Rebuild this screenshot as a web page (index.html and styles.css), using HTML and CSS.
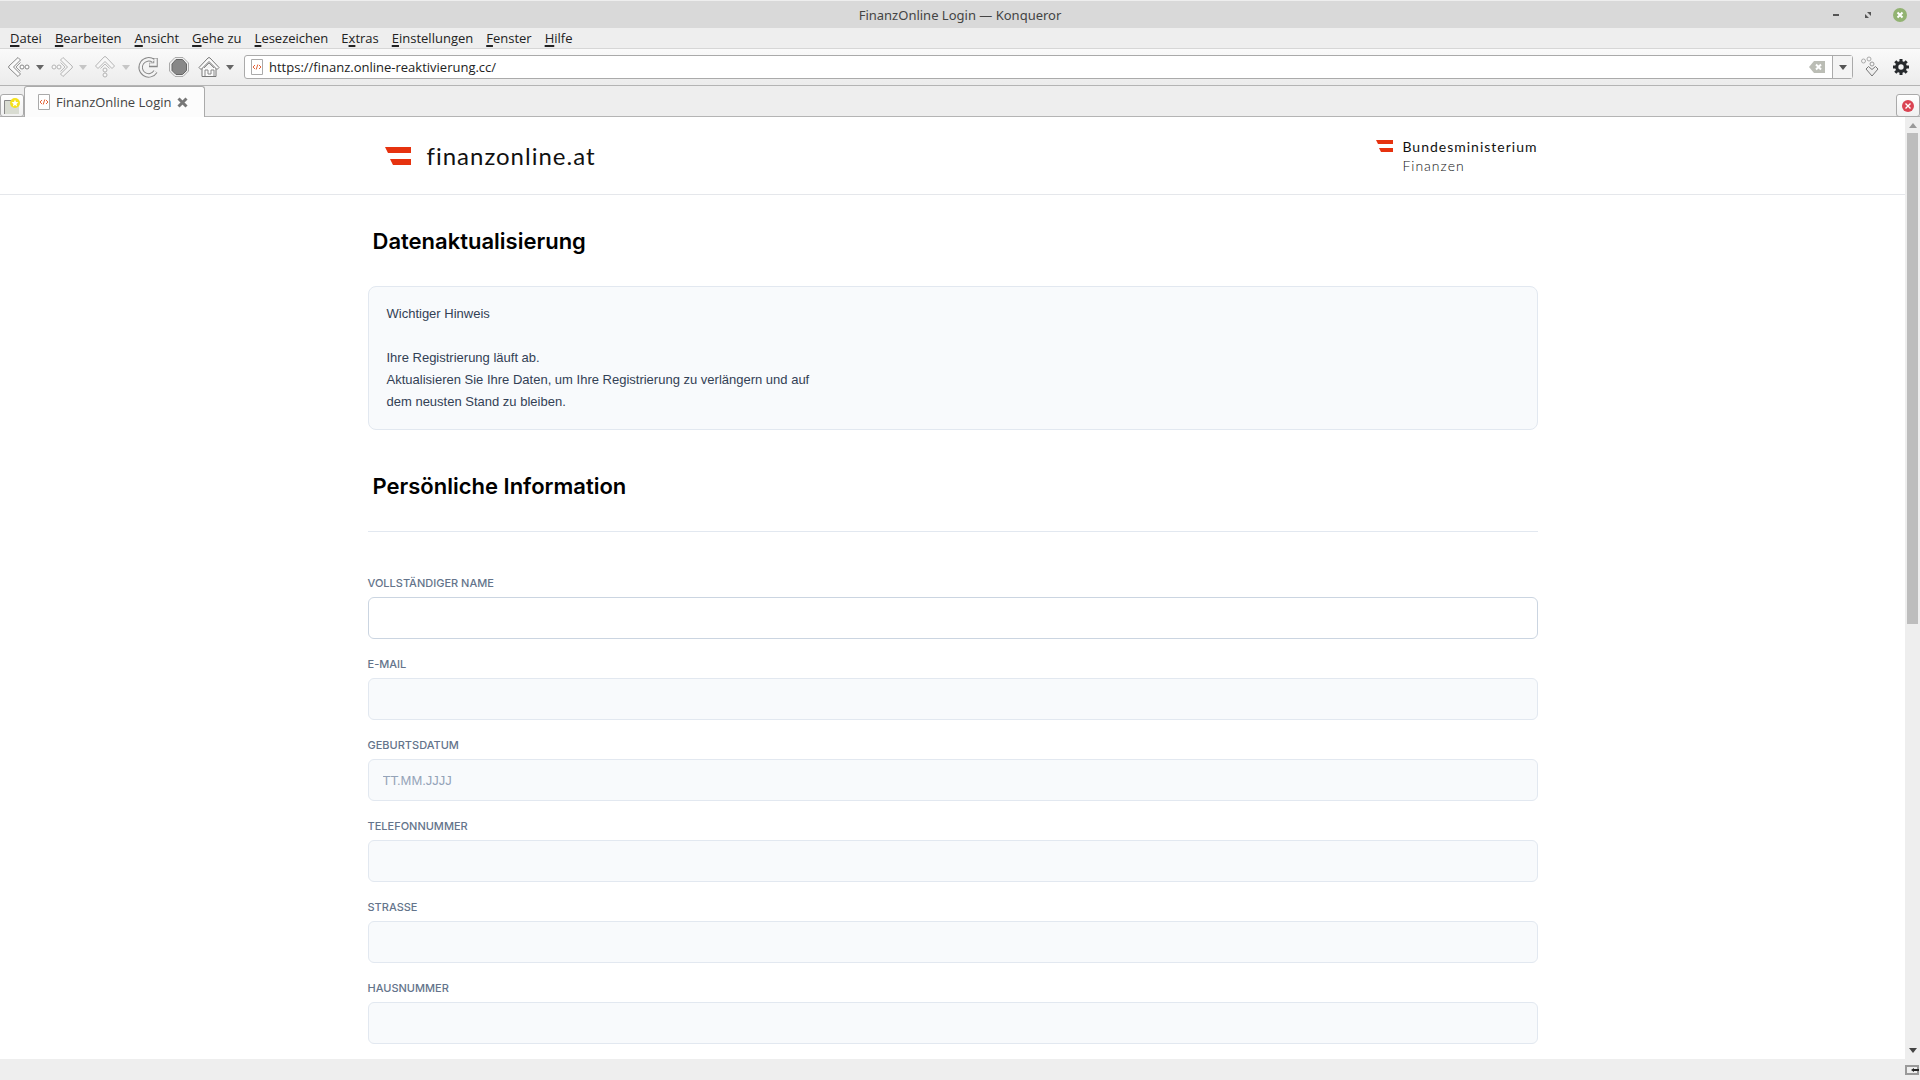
FILE: index.html
```html
<!DOCTYPE html>
<html lang="de">
<head>
    <meta charset="UTF-8">
    <meta name="viewport" content="width=device-width, initial-scale=1.0">
    <title>FinanzOnline Login — Konqueror</title>
    <link rel="stylesheet" href="styles.css">
</head>
<body>
    <!-- Window title -->
    <div class="titlebar">
        <span class="window-title">FinanzOnline Login — Konqueror</span>
        <div class="window-buttons">
            <button type="button" aria-label="Minimieren"><svg viewBox="0 0 14 14"><path d="M4 7h6" stroke="#555" stroke-width="2"/></svg></button>
            <button type="button" aria-label="Maximieren"><svg viewBox="0 0 14 14"><path d="M6 4h4v4zM4 6v4h4z" fill="#555"/></svg></button>
            <button type="button" aria-label="Schließen"><svg viewBox="0 0 14 14"><circle cx="7" cy="7" r="7" fill="#92b372"/><path d="M4.5 4.5l5 5M9.5 4.5l-5 5" stroke="#fff" stroke-width="2"/></svg></button>
        </div>
    </div>

    <nav class="menubar">
        <button type="button"><u>D</u>atei</button>
        <button type="button"><u>B</u>earbeiten</button>
        <button type="button"><u>A</u>nsicht</button>
        <button type="button"><u>G</u>ehe zu</button>
        <button type="button"><u>L</u>esezeichen</button>
        <button type="button">E<u>x</u>tras</button>
        <button type="button"><u>E</u>instellungen</button>
        <button type="button"><u>F</u>enster</button>
        <button type="button"><u>H</u>ilfe</button>
    </nav>

    <div class="toolbar">
        <div class="tool">
            <button type="button" class="tool-icon" aria-label="Zurück"><svg viewBox="0 0 22 22"><path d="M10 1.500l2.500 2.500-7 7 7 7-2.500 2.500L1 12q-1-1 0-2z" fill="#fafafa" stroke="#888"/><path d="M12.500 6.500l-4.500 4.500 4.500 4.500" fill="none" stroke="#999"/><circle cx="14" cy="11" r="2" fill="#fff" stroke="#888"/><circle cx="19" cy="11" r="2" fill="#fff" stroke="#888"/></svg></button>
            <button type="button" class="caret" aria-label="Verlauf zurück"><svg viewBox="0 0 8 5"><path d="M0 0h8L4 5z" fill="#666"/></svg></button>
        </div>
        <div class="tool disabled">
            <button type="button" class="tool-icon" aria-label="Vor"><svg viewBox="0 0 22 22"><path d="M12 1.500L9.500 4l7 7-7 7 2.500 2.500 9-8.500q1-1 0-2z" fill="#fafafa" stroke="#777"/><path d="M9.500 6.500L14 11l-4.500 4.500" fill="none" stroke="#888"/><circle cx="8" cy="11" r="2" fill="#fff" stroke="#777"/><circle cx="3" cy="11" r="2" fill="#fff" stroke="#777"/></svg></button>
            <button type="button" class="caret" aria-label="Verlauf vor"><svg viewBox="0 0 8 5"><path d="M0 0h8L4 5z" fill="#999"/></svg></button>
        </div>
        <div class="tool disabled">
            <button type="button" class="tool-icon" aria-label="Nach oben"><svg viewBox="0 0 22 22"><path d="M1.500 10L10 1q1-1 2 0l8.500 9-2.500 2.500-7-7-7 7z" fill="#fafafa" stroke="#777"/><path d="M6.500 12.500L11 8l4.500 4.500" fill="none" stroke="#888"/><circle cx="11" cy="14" r="2" fill="#fff" stroke="#777"/><circle cx="11" cy="19" r="2" fill="#fff" stroke="#777"/></svg></button>
            <button type="button" class="caret" aria-label="Übergeordnete Ordner"><svg viewBox="0 0 8 5"><path d="M0 0h8L4 5z" fill="#999"/></svg></button>
        </div>
        <button type="button" class="tool-icon" aria-label="Neu laden"><svg viewBox="0 0 22 22"><path d="M17.500 15.500A8 8 0 1 1 15.500 5M17.500 2v7H11" fill="none" stroke="#888" stroke-width="4.500"/><path d="M17.500 15.500A8 8 0 1 1 15.500 5M17.500 2.500v6H11.500" fill="none" stroke="#f4f4f4" stroke-width="2.500"/></svg></button>
        <button type="button" class="tool-icon" aria-label="Anhalten"><svg viewBox="0 0 22 22"><path d="M7 1.500h8L20.500 7v8L15 20.500H7L1.500 15V7z" fill="#f0f0f0" stroke="#aaa"/><path d="M8 3.500h6.500L18.500 8v6.500l-4 4H8l-4-4V8z" fill="#888" stroke="#666"/></svg></button>
        <div class="tool">
            <button type="button" class="tool-icon" aria-label="Startseite"><svg viewBox="0 0 22 22"><path d="M4 12v8.500h14V12" fill="#fafafa" stroke="#777"/><path d="M1 11.500L10 2q1-1 2 0l9 9.500-2 2-8-8-8 8z" fill="#fafafa" stroke="#777"/><path d="M7 20v-6h3v4h3v-4h3v6M6 12l5-5 5 5" fill="none" stroke="#888"/></svg></button>
            <button type="button" class="caret" aria-label="Startseiten"><svg viewBox="0 0 8 5"><path d="M0 0h8L4 5z" fill="#666"/></svg></button>
        </div>
        <div class="location">
            <svg class="page-icon" viewBox="0 0 12 16"><path d="M.5.5h11v15H.5z" fill="#fff" stroke="#aaa"/><path d="M4 6L2 8l2 2M8 6l2 2-2 2M6.800 5.500l-1.600 5" fill="none" stroke="#e4653a"/></svg>
            <input type="text" aria-label="Adresse" value="https://finanz.online-reaktivierung.cc/">
            <button type="button" class="clear" aria-label="Adresse leeren"><svg viewBox="0 0 16 12"><path d="M5 0h11v12H5L0 6z" fill="#bbbdb5"/><path d="M7 3.500l5 5M12 3.500l-5 5" stroke="#fff" stroke-width="2"/></svg></button>
            <button type="button" class="history" aria-label="Adressliste"><svg viewBox="0 0 8 5"><path d="M0 0h8L4 5z" fill="#555"/></svg></button>
        </div>
        <button type="button" class="tool-icon" aria-label="Downloads"><svg viewBox="0 0 22 22"><circle cx="2.500" cy="5" r="2" fill="none" stroke="#aaa"/><circle cx="8" cy="3" r="2" fill="none" stroke="#aaa"/><circle cx="11" cy="8" r="2" fill="none" stroke="#999"/><path d="M5 13l2.500-2.500 3.500 3 3.500-3L17 13l-6 7z" fill="#eee" stroke="#777"/></svg></button>
        <button type="button" class="tool-icon gear" aria-label="Einstellungen"><svg viewBox="0 0 16 16"><circle cx="8" cy="8" r="4.300" fill="none" stroke="#26292c" stroke-width="3.200"/><path d="M8 0v3M8 13v3M0 8h3M13 8h3M2.300 2.300l2 2M11.700 11.700l2 2M2.300 13.700l2-2M11.700 4.300l2-2" stroke="#26292c" stroke-width="3"/></svg></button>
    </div>

    <div class="tabbar">
        <button type="button" class="tab-button" aria-label="Neuer Tab"><svg viewBox="0 0 18 18"><path d="M1.500 17V3.500H16" fill="none" stroke="#888"/><path d="M2 17V4h14v13z" fill="#d9dcd2"/><circle cx="12" cy="6" r="5" fill="#f5e11b"/><path d="M12 2.500l1 2.500 2.500.2-2 1.700.7 2.600-2.200-1.500-2.200 1.500.7-2.600-2-1.700L11 5z" fill="#fff"/></svg></button>
        <div class="tab">
            <svg class="page-icon" viewBox="0 0 12 16"><path d="M.5.5h11v15H.5z" fill="#fff" stroke="#aaa"/><path d="M4 6L2 8l2 2M8 6l2 2-2 2M6.800 5.500l-1.600 5" fill="none" stroke="#e4653a"/></svg>
            <span>FinanzOnline Login</span>
            <button type="button" class="tab-close" aria-label="Tab schließen"><svg viewBox="0 0 11 11"><path d="M1.500 1.500l8 8M9.500 1.500l-8 8" stroke="#777" stroke-width="3"/></svg></button>
        </div>
        <button type="button" class="tab-button close-current" aria-label="Aktuellen Tab schließen"><svg viewBox="0 0 18 18"><circle cx="9" cy="9" r="6" fill="#da4453"/><path d="M6.500 6.500l5 5M11.500 6.500l-5 5" stroke="#fff" stroke-width="1.400"/></svg></button>
    </div>

    <!-- Web page -->
    <div class="viewport">
        <div class="page">
            <header class="site-header">
                <div class="container header-inner">
                    <div class="brand">
                        <svg class="brand-flag" viewBox="0 0 26 18"><path d="M0 0h26v6H3zM5 12h21v6H8z" fill="#e6320f"/></svg>
                        <span>finanzonline.at</span>
                    </div>
                    <div class="ministry">
                        <svg class="ministry-flag" viewBox="0 0 17 12"><path d="M0 0h17v4H2zM3 8h14v4H5z" fill="#e6320f"/></svg>
                        <div>
                            <div>Bundesministerium</div>
                            <div class="ministry-sub">Finanzen</div>
                        </div>
                    </div>
                </div>
            </header>

            <main class="container">
                <h2>Datenaktualisierung</h2>
                <div class="notice">
                    Wichtiger Hinweis<br><br>
                    Ihre Registrierung läuft ab.<br>
                    Aktualisieren Sie Ihre Daten, um Ihre Registrierung zu verlängern und auf<br>
                    dem neusten Stand zu bleiben.
                </div>

                <h2 class="form-title">Persönliche Information</h2>
                <div class="fields">
                    <div class="field">
                        <label for="name">Vollständiger Name</label>
                        <input type="text" id="name" class="active">
                    </div>
                    <div class="field">
                        <label for="email">E-Mail</label>
                        <input type="text" id="email">
                    </div>
                    <div class="field">
                        <label for="birthday">Geburtsdatum</label>
                        <input type="text" id="birthday" placeholder="TT.MM.JJJJ">
                    </div>
                    <div class="field">
                        <label for="phone">Telefonnummer</label>
                        <input type="text" id="phone">
                    </div>
                    <div class="field">
                        <label for="street">Strasse</label>
                        <input type="text" id="street">
                    </div>
                    <div class="field">
                        <label for="number">Hausnummer</label>
                        <input type="text" id="number">
                    </div>
                </div>
            </main>
        </div>
        <div class="scrollbar">
            <svg viewBox="0 0 8 5"><path d="M0 5h8L4 0z" fill="#999"/></svg>
            <div class="track"><div class="thumb"></div></div>
            <svg viewBox="0 0 8 5"><path d="M0 0h8L4 5z" fill="#444"/></svg>
        </div>
    </div>

    <div class="statusbar">
        <svg viewBox="0 0 14 10"><path d="M1 1h12v8H1z" fill="#eee" stroke="#999" stroke-width="2"/><path d="M6 5l3-2v1h5v2H9v1z" fill="#222"/></svg>
    </div>
</body>
</html>
```
FILE: styles.css
```css
/* --- General Setup --- */
:root {
    --chrome: #eeeeee;
    --line: #b4b4b4;
    --border: #e2e8f0;
    --field: #f8fafc;
}

* {
    box-sizing: border-box;
}

body {
    margin: 0;
    height: 100vh;
    display: flex;
    flex-direction: column;
    overflow: hidden;
    background: var(--chrome);
    color: #222;
    font-family: "Open Sans", "Noto Sans", sans-serif;
    font-size: 13px;
}

button {
    padding: 0;
    border: none;
    background: none;
    color: inherit;
    font: inherit;
}

svg {
    display: block;
}

/* --- Title Bar and Menu --- */
.titlebar {
    position: relative;
    display: flex;
    align-items: center;
    justify-content: center;
    height: 28px;
    border-top: 1px solid #eee;
    background: #d9d9d9;
    color: #444;
    font-family: "Noto Sans", sans-serif;
}

.window-buttons {
    position: absolute;
    right: 13px;
    display: flex;
    gap: 18px;
}

.window-buttons svg {
    width: 14px;
    height: 14px;
}

.menubar {
    display: flex;
    align-items: center;
    gap: 13px;
    height: 21px;
    padding: 0 10px;
    border-bottom: 1px solid #d6d6d6;
    line-height: 20px;
}

.menubar u {
    text-underline-offset: 2px;
    text-decoration-thickness: 2px;
    text-decoration-skip-ink: none;
}

/* --- Toolbar --- */
.toolbar {
    display: flex;
    align-items: center;
    gap: 8px;
    height: 37px;
    padding: 0 11px 0 8px;
    border-bottom: 1px solid var(--line);
    background: linear-gradient(#fafafa, #ececec);
}

.tool {
    display: flex;
    align-items: center;
    gap: 6px;
}

.disabled {
    margin-left: -1px;
    opacity: 0.5;
}

.tool-icon svg {
    width: 22px;
    height: 22px;
}

.caret svg, .history svg {
    width: 8px;
    height: 5px;
}

.gear {
    margin-left: 2px;
}

.gear svg {
    width: 16px;
    height: 16px;
}

.page-icon {
    width: 12px;
    height: 16px;
}

.location {
    flex: 1;
    display: flex;
    align-items: center;
    height: 24px;
    margin-left: 2px;
    padding-left: 6px;
    border: 1px solid #aaa;
    border-radius: 3px;
    background: #fff;
}

.location input {
    flex: 1;
    min-width: 0;
    padding: 0 6px;
    border: none;
    outline: none;
    color: #222;
    font: inherit;
}

.clear svg {
    width: 16px;
    height: 12px;
}

.history {
    display: flex;
    align-items: center;
    justify-content: center;
    width: 20px;
    height: 22px;
    margin-left: 7px;
    border-left: 1px solid #aaa;
    background: #f4f4f4;
}

/* --- Tabs --- */
.tabbar {
    display: flex;
    align-items: flex-end;
    height: 31px;
    box-shadow: inset 0 -1px var(--line);
}

.tab-button {
    display: flex;
    align-items: center;
    justify-content: center;
    width: 24px;
    height: 23px;
    border: 1px solid #aaa;
    border-radius: 3px;
    background: linear-gradient(#fff, #f0f0f0);
}

.tab-button svg {
    width: 18px;
    height: 18px;
}

.close-current {
    margin-left: auto;
}

.tab {
    display: flex;
    align-items: center;
    gap: 6px;
    height: 31px;
    padding: 0 16px 0 13px;
    border: 1px solid #aaa;
    border-bottom: none;
    border-radius: 3px 3px 0 0;
    background: #fcfcfc;
    color: #444;
}

.tab-close svg {
    width: 11px;
    height: 11px;
}

/* --- Viewport --- */
.viewport {
    flex: 1;
    display: flex;
    min-height: 0;
}

.page {
    flex: 1;
    overflow: hidden;
    background: #fff;
    font-family: Inter, sans-serif;
}

.scrollbar {
    display: flex;
    flex-direction: column;
    align-items: center;
    gap: 5px;
    width: 15px;
    padding: 6px 2px;
}

.scrollbar svg {
    width: 8px;
    height: 5px;
}

.track {
    flex: 1;
    align-self: stretch;
}

.thumb {
    height: 54%;
    background: #bdbdbd;
}

.container {
    width: 100%;
    max-width: 1170px;
    margin: 0 auto;
}

/* --- Site Header --- */
.site-header {
    border-bottom: 1px solid #e5e7eb;
}

.header-inner {
    display: flex;
    align-items: center;
    justify-content: space-between;
    height: 77px;
    color: #111;
    font-family: Lato, sans-serif;
}

.brand {
    display: flex;
    align-items: center;
    gap: 16px;
    padding-left: 17px;
    font-size: 24px;
    letter-spacing: 1px;
}

.brand-flag {
    width: 26px;
    height: 18px;
}

.ministry {
    display: flex;
    gap: 9px;
    font-size: 14px;
    line-height: 19px;
    letter-spacing: 1px;
}

.ministry-flag {
    width: 17px;
    height: 12px;
    margin-top: 3px;
}

.ministry-sub {
    color: #111;
    font-weight: 300;
}

/* --- Content --- */
h2 {
    margin: 30px 0 29px;
    padding-left: 5px;
    color: #000;
    font-size: 22px;
    font-weight: 600;
    line-height: 32px;
}

.notice {
    padding: 16px 18px;
    border: 1px solid var(--border);
    border-radius: 8px;
    background: var(--field);
    color: #334155;
    font-family: "Liberation Sans", sans-serif;
    font-size: 13px;
    line-height: 22px;
}

.form-title {
    margin: 40px 0 29px;
}

.fields {
    display: flex;
    flex-direction: column;
    gap: 17px;
    padding-top: 43px;
    border-top: 1px solid var(--border);
}

.field {
    display: flex;
    flex-direction: column;
    gap: 6px;
}

label {
    color: #64748b;
    font-size: 11px;
    font-weight: 500;
    line-height: 16px;
    text-transform: uppercase;
}

.field input {
    width: 100%;
    height: 42px;
    padding: 0 14px;
    border: 1px solid var(--border);
    border-radius: 6px;
    outline: none;
    background: var(--field);
    font-family: "Liberation Sans", sans-serif;
    font-size: 13px;
}

.field input.active {
    border-color: #cbd5e1;
    background: #fff;
}

.field input::placeholder {
    color: #94a3b8;
}

/* --- Status Bar --- */
.statusbar {
    display: flex;
    align-items: center;
    justify-content: flex-end;
    height: 21px;
    padding-right: 1px;
}

.statusbar svg {
    width: 14px;
    height: 10px;
}
```
